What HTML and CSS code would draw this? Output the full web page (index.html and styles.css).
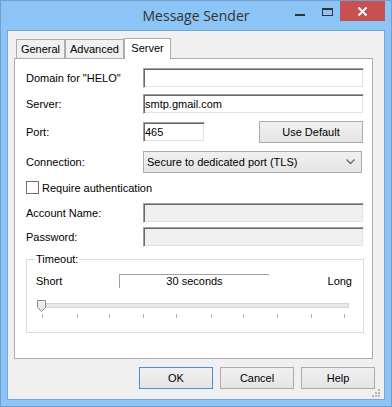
FILE: index.html
```html
<!DOCTYPE html>
<html>
<head>
<meta charset="utf-8">
<link rel="stylesheet" href="styles.css">
</head>
<body>
<div class="window">
  <div class="titlebar">
    <div></div>
    <div class="title">Message Sender</div>
    <div class="controls">
      <div class="cbtn"><svg width="27" height="20"><rect x="9" y="13" width="10" height="2" fill="#333"/></svg></div>
      <div class="cbtn"><svg width="27" height="20"><path d="M9 7H20V15H9Z M10 9V14H19V9Z" fill="#333" fill-rule="evenodd"/></svg></div>
      <div class="cbtn close"><svg width="45" height="20"><path d="M18.5 6.5L26.5 14.5M26.5 6.5L18.5 14.5" stroke="#fff" stroke-width="2"/></svg></div>
    </div>
  </div>
  <div class="client">
    <div class="tabs">
      <div class="tab t-general">General</div>
      <div class="tab t-advanced">Advanced</div>
      <div class="tab active t-server">Server</div>
    </div>
    <div class="panel">
      <div class="row r1"><span class="lbl">Domain for "HELO"</span><div class="field wide"></div></div>
      <div class="row r2"><span class="lbl">Server:</span><div class="field wide">smtp.gmail.com</div></div>
      <div class="row r3"><span class="lbl">Port:</span><div class="field port">465</div><div class="btn usedef">Use Default</div></div>
      <div class="row r4"><span class="lbl">Connection:</span><div class="combo"><span>Secure to dedicated port (TLS)</span><svg width="9" height="6"><path d="M0.5 0.5L4.5 4.5L8.5 0.5" stroke="#6d6d6d" stroke-width="1.4" fill="none"/></svg></div></div>
      <div class="row r5"><span class="check"></span><span class="chklbl">Require authentication</span></div>
      <div class="row r6"><span class="lbl">Account Name:</span><div class="field wide disabled"></div></div>
      <div class="row r7"><span class="lbl">Password:</span><div class="field wide disabled"></div></div>
      <fieldset class="group">
        <legend>Timeout:</legend>
        <div class="trow">
          <span>Short</span>
          <div class="valbox">30 seconds</div>
          <span></span>
          <span>Long</span>
        </div>
        <svg class="slider" width="315" height="20">
          <rect x="4.5" y="4.5" width="308" height="4" fill="#e7eaea" stroke="#d6d6d6"/>
          <g fill="#b0b0b0">
            <rect x="6" y="15" width="1" height="4"/>
            <rect x="41" y="15" width="1" height="4"/>
            <rect x="73" y="15" width="1" height="4"/>
            <rect x="107" y="15" width="1" height="4"/>
            <rect x="140" y="15" width="1" height="4"/>
            <rect x="175" y="15" width="1" height="4"/>
            <rect x="207" y="15" width="1" height="4"/>
            <rect x="241" y="15" width="1" height="4"/>
            <rect x="275" y="15" width="1" height="4"/>
            <rect x="308" y="15" width="1" height="4"/>
          </g>
          <defs><linearGradient id="tg" x1="0" y1="0" x2="0" y2="1"><stop offset="0" stop-color="#f2f2f2"/><stop offset="1" stop-color="#e0e0e0"/></linearGradient></defs>
          <path d="M1.5 1.5H9.5V8.5L5.5 12.5L1.5 8.5Z" fill="url(#tg)" stroke="#8c8c8c"/>
        </svg>
      </fieldset>
    </div>
    <div class="buttons">
      <div class="btn dlg default">OK</div>
      <div class="btn dlg">Cancel</div>
      <div class="btn dlg">Help</div>
    </div>
    <svg class="grip" width="9" height="9">
      <g fill="#b8b8b8">
        <rect x="6" y="0" width="2" height="2"/>
        <rect x="3" y="3" width="2" height="2"/>
        <rect x="6" y="3" width="2" height="2"/>
        <rect x="0" y="6" width="2" height="2"/>
        <rect x="3" y="6" width="2" height="2"/>
        <rect x="6" y="6" width="2" height="2"/>
      </g>
    </svg>
  </div>
</div>
</body>
</html>
```

FILE: styles.css
```css
html, body {
  margin: 0;
  padding: 0;
  background: #8cc4f6;
}
.window {
  width: 392px;
  height: 407px;
  box-sizing: border-box;
  background: #8cc4f6;
  border: 1px solid #6e9fd0;
  padding: 0 6px 6px 6px;
  display: flex;
  flex-direction: column;
  font-family: "Liberation Sans", Arial, sans-serif;
  font-size: 11px;
  color: #000;
}
.titlebar {
  height: 29px;
  display: grid;
  grid-template-columns: 1fr auto 1fr;
  align-items: center;
}
.title {
  font-family: "Open Sans", "Noto Sans", sans-serif;
  font-size: 14px;
  color: #333;
  line-height: 20px;
  padding-top: 0px;
}
.controls {
  justify-self: end;
  align-self: start;
  display: flex;
}
.cbtn {
  height: 20px;
  display: flex;
}
.cbtn.close {
  background: #c75050;
}
.client {
  position: relative;
  flex: 1;
  background: #f0f0f0;
  border: 1px solid #72a7da;
  display: flex;
  flex-direction: column;
}
.tabs {
  display: flex;
  align-items: flex-end;
  height: 20px;
  margin-top: 7px;
  margin-left: 8px;
}
.tab {
  box-sizing: border-box;
  height: 19px;
  border: 1px solid #acacac;
  border-bottom: none;
  background: #f0f0f0;
  line-height: 18px;
  text-align: center;
}
.t-general { width: 49px; }
.t-advanced { width: 59px; }
.t-server { width: 47px; }
.tab.active {
  height: 21px;
  background: #fff;
  position: relative;
  z-index: 1;
  margin-bottom: -1px;
  line-height: 18px;
  padding-bottom: 2px;
}
.panel {
  box-sizing: border-box;
  margin-left: 6px;
  width: 359px;
  height: 301px;
  border: 1px solid #acacac;
  background: #fff;
  padding: 0 8px 0 11px;
  display: flex;
  flex-direction: column;
}
.row {
  display: flex;
  align-items: center;
}
.r1 { margin-top: 9px; height: 20px; }
.r2 { margin-top: 6px; height: 20px; }
.r3 { margin-top: 7px; height: 22px; }
.r4 { margin-top: 8px; height: 22px; }
.r5 { margin-top: 8px; height: 13px; }
.r6 { margin-top: 9px; height: 20px; }
.r7 { margin-top: 4px; height: 20px; }
.lbl {
  width: 117px;
  flex: none;
}
.field {
  box-sizing: border-box;
  height: 20px;
  background: #fff;
  border: 1px solid;
  border-color: #a0a0a0 #ffffff #ffffff #a0a0a0;
  box-shadow: inset 1px 1px 0 #696969, inset -1px -1px 0 #e3e3e3;
  padding-left: 1px;
  line-height: 18px;
}
.field.wide { width: 221px; }
.field.port { width: 62px; }
.field.disabled { background: #f0f0f0; }
.btn {
  box-sizing: border-box;
  height: 22px;
  border: 1px solid #acacac;
  background: linear-gradient(#f0f0f0, #e5e5e5);
  text-align: center;
  line-height: 20px;
}
.usedef {
  width: 104px;
  margin-left: auto;
  margin-right: 1px;
}
.combo {
  box-sizing: border-box;
  width: 219px;
  height: 22px;
  border: 1px solid #acacac;
  background: linear-gradient(#f0f0f0, #e5e5e5);
  display: flex;
  align-items: center;
  justify-content: space-between;
  padding: 0 6px 0 3px;
}
.check {
  box-sizing: border-box;
  width: 13px;
  height: 13px;
  border: 1px solid #707070;
  background: #fff;
  flex: none;
}
.chklbl {
  margin-left: 3px;
}
.group {
  margin: 6px 0 0 0;
  padding: 8px 11px 13px 9px;
  border: 1px solid #dcdcdc;
  min-width: 0;
}
.group legend {
  padding: 0 1px;
  margin-left: -1px;
  line-height: 13px;
}
.trow {
  display: grid;
  grid-template-columns: 83px 150px 1fr auto;
  align-items: center;
  height: 14px;
}
.valbox {
  box-sizing: border-box;
  height: 14px;
  border-top: 1px solid #a0a0a0;
  border-left: 1px solid #a0a0a0;
  text-align: center;
  line-height: 13px;
}
.slider {
  display: block;
  margin-top: 11px;
}
.buttons {
  display: flex;
  justify-content: flex-end;
  gap: 7px;
  padding-right: 9px;
  margin-top: 8px;
}
.btn.dlg {
  width: 74px;
}
.btn.default {
  border-color: #4a90d9;
}
.grip {
  position: absolute;
  right: 3px;
  bottom: 1px;
}
```
